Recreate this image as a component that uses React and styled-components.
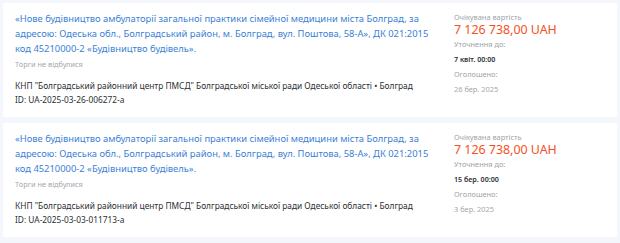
import React from "react";
import styled, { createGlobalStyle } from "styled-components";

const GlobalStyle = createGlobalStyle`
  html, body {
    margin: 0;
    padding: 0;
    background: #f3f6fa;
  }
  body {
    font-family: "Noto Sans", "Open Sans", Arial, sans-serif;
  }
`;

const List = styled.div`
  display: flex;
  flex-direction: column;
  gap: 6px;
  padding: 3px 3px 0 3px;
`;

const Card = styled.div`
  display: grid;
  grid-template-columns: 425px 1fr;
  column-gap: 14px;
  background: #fff;
  padding: 8px 12px 0 12px;
  height: 106px;
  overflow: hidden;
  box-sizing: content-box;
`;

const Main = styled.div`
  display: flex;
  flex-direction: column;
`;

const Title = styled.a`
  color: #3b7fd6;
  font-size: 9.4px;
  line-height: 15px;
  text-decoration: none;
`;

const Status = styled.div`
  color: #a3a8ae;
  font-size: 7.4px;
  line-height: 10px;
  margin-top: 3px;
`;

const Org = styled.div`
  color: #2b2f33;
  font-size: 8.33px;
  line-height: 13.5px;
  margin-top: 10px;
`;

const Side = styled.div`
  display: flex;
  flex-direction: column;
`;

const Label = styled.div`
  color: #9ea3a9;
  font-size: 7.4px;
  line-height: ${(p) => (p.first ? "12px" : "15px")};
`;

const Price = styled.div`
  color: #f4511e;
  font-size: 12.4px;
  line-height: 14px;
`;

const Value = styled.div`
  color: ${(p) => (p.muted ? "#a3a8ae" : "#2b2f33")};
  font-size: ${(p) => (p.muted ? "7.4px" : "7.1px")};
  line-height: 15px;
  font-weight: ${(p) => (p.muted ? 400 : 600)};
`;

const tenders = [
  {
    id: "UA-2025-03-26-006272-a",
    until: "7 квіт. 00:00",
    published: "26 бер. 2025",
  },
  {
    id: "UA-2025-03-03-011713-a",
    until: "15 бер. 00:00",
    published: "3 бер. 2025",
  },
];

const title =
  "«Нове будівництво амбулаторії загальної практики сімейної медицини міста Болград, за адресою: Одеська обл., Болградський район, м. Болград, вул. Поштова, 58-А», ДК 021:2015 код 45210000-2 «Будівництво будівель».";

const TenderCard = ({ id, until, published }) => (
  <Card>
    <Main>
      <Title href="#">{title}</Title>
      <Status>Торги не відбулися</Status>
      <Org>
        КНП "Болградський районний центр ПМСД" Болградської міської ради
        Одеської області • Болград
        <br />
        ID: {id}
      </Org>
    </Main>
    <Side>
      <Label first>Очікувана вартість</Label>
      <Price>7 126 738,00 UAH</Price>
      <Label>Уточнення до:</Label>
      <Value>{until}</Value>
      <Label>Оголошено:</Label>
      <Value muted>{published}</Value>
    </Side>
  </Card>
);

export default function App() {
  return (
    <>
      <GlobalStyle />
      <List>
        {tenders.map((t) => (
          <TenderCard key={t.id} {...t} />
        ))}
      </List>
    </>
  );
}
